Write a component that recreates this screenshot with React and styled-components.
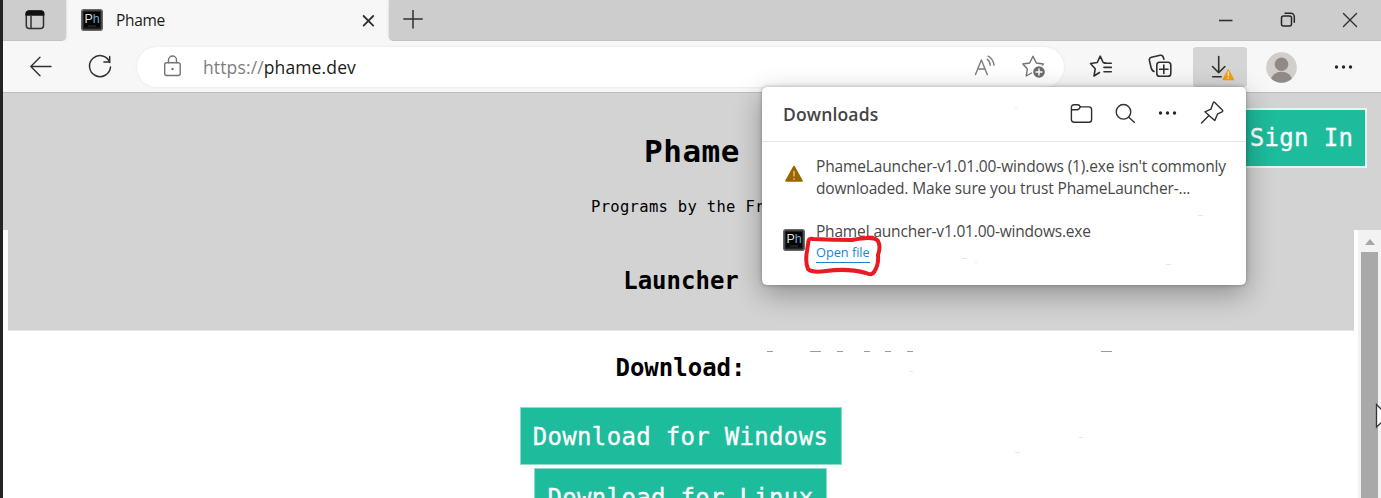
import React from 'react';
import styled, { createGlobalStyle } from 'styled-components';

const Global = createGlobalStyle`
  * { box-sizing: border-box; }
  body { margin: 0; overflow: hidden; background: #fff; font-family: "Open Sans", "Noto Sans", sans-serif; }
  h1, h2, p { margin: 0; }
`;

const Window = styled.div`
  position: relative;
  display: flex;
  flex-direction: column;
  width: 1381px;
  height: 498px;
  overflow: hidden;
  border-left: 3px solid #232323;
`;

const TabStrip = styled.div`
  display: flex;
  flex: none;
  height: 41px;
  background: #f7f7f7;
`;

const StripSection = styled.div`
  display: flex;
  align-items: center;
  background: #cdcdcd;
  border-bottom: 1px solid #c2c2c2;
  height: 41px;
  padding-left: ${p => p.$pad}px;
  flex: ${p => (p.$grow ? '1' : `0 0 ${p.$width}px`)};
  border-radius: ${p => (p.$grow ? '0 0 0 5px' : '0 0 5px 0')};
  box-shadow: 0 0 3px rgba(0, 0, 0, 0.18);
`;

const Tab = styled.div`
  display: flex;
  align-items: center;
  width: 323px;
  height: 41px;
  padding: 0 13px 2px 15px;
`;

const TabTitle = styled.span`
  flex: 1;
  margin-left: 13px;
  font-size: 15.5px;
  letter-spacing: -0.35px;
  color: #1c1c1c;
`;

const WindowControls = styled.div`
  display: flex;
  align-items: center;
  gap: 45px;
  margin-left: auto;
  padding-right: 22px;
`;

const Toolbar = styled.div`
  display: flex;
  flex: none;
  align-items: center;
  height: 52px;
  padding: 1px 26px 0 25px;
  background: #f7f7f7;
  border-bottom: 1px solid #bdbdbd;
`;

const AddressBar = styled.div`
  display: flex;
  align-items: center;
  width: 927px;
  height: 40px;
  margin: 0 24px 0 24px;
  padding: 0 17px 0 25px;
  background: #fff;
  border-radius: 20px;
  box-shadow: 0 0 3px rgba(0, 0, 0, 0.08);
`;

const Url = styled.span`
  flex: 1;
  margin-left: 20px;
  font-size: 17.5px;
  letter-spacing: 0.13px;
  color: #7d7d7d;
  b { font-weight: 400; color: #1a1a1a; }
`;

const Slot = styled.div`
  display: flex;
  align-items: center;
  justify-content: center;
  width: ${p => p.$w}px;
  height: 40px;
  margin-left: ${p => p.$ml || 0}px;
  border-radius: 3px;
  background: ${p => (p.$active ? '#d5d5d5' : 'transparent')};
`;

const Page = styled.main`
  display: flex;
  flex-direction: column;
  flex: 1;
  font-family: "DejaVu Sans Mono", monospace;
  color: #000;
`;

const Masthead = styled.header`
  position: relative;
  display: flex;
  flex-direction: column;
  align-items: center;
  height: 137px;
  padding: 40px 0 0;
  background: #d3d3d3;
`;

const SiteTitle = styled.h1`
  font-size: 31px;
  line-height: 36px;
  letter-spacing: 0.5px;
`;

const Tagline = styled.p`
  margin: 28px 0 0 588px;
  align-self: flex-start;
  font-size: 15.5px;
  line-height: 20px;
  letter-spacing: 0.32px;
  white-space: nowrap;
`;

const SignIn = styled.button`
  position: absolute;
  top: 15px;
  right: 14px;
  width: 132px;
  height: 60px;
  padding: 0 0 0 1px;
  border: 2px solid #e8f5f1;
  background: #1dbc9c;
  color: #fff;
  font: 24px "DejaVu Sans Mono", monospace;
  letter-spacing: 0.35px;
  -webkit-text-stroke: 0.3px #fff;
`;

const Body = styled.div`
  display: flex;
  flex: 1;
  background: #fff;
`;

const Content = styled.div`
  display: flex;
  flex-direction: column;
  align-items: center;
  flex: 1;
  padding: 0 4px 0 5px;
`;

const LauncherBand = styled.section`
  display: flex;
  justify-content: center;
  width: 100%;
  height: 101px;
  padding: 33px 0 0 0;
  background: #d3d3d3;
  border-bottom: 1px solid #e6e6e6;
`;

const Heading = styled.h2`
  height: 36px;
  font-size: 24px;
  line-height: 36px;
  letter-spacing: 0;
`;

const DownloadArea = styled.section`
  display: flex;
  flex-direction: column;
  align-items: center;
  padding: 19px 1px 0 0;
  gap: 3px;
  ${Heading} { margin-bottom: 18px; }
`;

const DownloadButton = styled.button`
  width: ${p => p.$w}px;
  height: 58px;
  flex: none;
  padding: 1px 0 0;
  border: 1px solid #8bdccb;
  background: #1dbc9c;
  color: #fff;
  font: 24px "DejaVu Sans Mono", monospace;
  letter-spacing: 0.32px;
  -webkit-text-stroke: 0.3px #fff;
  white-space: nowrap;
`;

const Scrollbar = styled.div`
  display: flex;
  flex-direction: column;
  width: 23px;
  padding: 9px 3px 0;
  background: #f2f2f2;
`;

const ScrollArrow = styled.i`
  width: 0;
  height: 0;
  margin: 0 auto 7px;
  border: 5px solid transparent;
  border-top: 0;
  border-bottom: 6px solid #a6a6a6;
`;

const ScrollThumb = styled.div`
  flex: 1;
  background: #a9a9a9;
`;

const Popup = styled.aside`
  position: absolute;
  left: 759px;
  top: 87px;
  width: 484px;
  height: 198px;
  border-radius: 5px;
  background: #fff;
  box-shadow: 0 9px 28px rgba(0, 0, 0, 0.32), 0 0 4px rgba(0, 0, 0, 0.3);
`;

const PopupHeader = styled.div`
  display: flex;
  align-items: center;
  height: 55px;
  padding: 0 21px 2px;
  border-bottom: 1px solid #e4e4e4;
  color: #444;
`;

const PopupTitle = styled.strong`
  flex: 1;
  font-size: 17.5px;
  font-weight: 600;
  letter-spacing: 0.15px;
  padding-top: 1px;
`;

const PopupActions = styled.div`
  display: flex;
  align-items: center;
  gap: 21px;
`;

const DownloadRow = styled.div`
  display: flex;
  align-items: flex-start;
  padding: ${p => p.$top}px 0 0 21px;
  > svg { flex: none; margin-top: ${p => p.$icon}px; }
`;

const FileText = styled.div`
  margin-left: 11px;
  font-size: 15.5px;
  line-height: 22px;
  color: #484848;
  white-space: nowrap;
`;

const Line = styled.div`
  letter-spacing: ${p => p.$ls}px;
`;

const OpenLink = styled.a`
  display: block;
  width: 54px;
  height: 20px;
  margin-top: 1px;
  border-bottom: 1px solid #1b83d5;
  color: #1b83d5;
  font-size: 12.8px;
  line-height: 18px;
  letter-spacing: -0.05px;
`;

const Overlay = styled.svg`
  position: absolute;
  left: ${p => p.$x}px;
  top: ${p => p.$y}px;
  pointer-events: none;
`;

const Icon = ({ w = 24, h = w, sw = 1.4, color = '#303030', children }) => (
  <svg width={w} height={h} viewBox={`0 0 ${w} ${h}`} fill="none" stroke={color} strokeWidth={sw} strokeLinecap="round" strokeLinejoin="round">
    {children}
  </svg>
);

const AppLogo = () => (
  <svg width="22" height="22" viewBox="0 0 22 22">
    <rect x="0.8" y="0.8" width="20.4" height="20.4" rx="2" fill="#222" stroke="#686868" strokeWidth="1.6" />
    <rect x="3" y="3" width="16" height="15.5" fill="#050505" />
    <text x="3.5" y="14" fontFamily="Liberation Sans, sans-serif" fontSize="12.5" fill="#ddd">P<tspan fill="#73a5c8">h</tspan></text>
    <path d="M7 17h8" stroke="#3b3b3b" />
  </svg>
);

const Dots = () => (
  <Icon w={20} h={6}>
    {[2.5, 9.5, 16.5].map(x => <circle key={x} cx={x} cy="3" r="1.7" fill="#262626" stroke="none" />)}
  </Icon>
);

const specks = [
  [767, 351, 6], [810, 351, 11], [837, 351, 6], [864, 351, 6], [885, 351, 6], [907, 351, 6], [1101, 351, 11],
];
const faintSpecks = [[910, 371, 3], [1079, 437, 4], [1015, 452, 5], [1198, 215, 5], [1166, 264, 5], [962, 258, 5], [975, 262, 2], [1015, 107, 2]];

export default function App() {
  return (
    <>
      <Global />
      <Window>
        <TabStrip>
          <StripSection $width={63} $pad={22}>
            <Icon w={21} sw={1.5}>
              <rect x="1.3" y="1.2" width="17.2" height="17.4" rx="3" />
              <path d="M1.1 5V4a3 3 0 0 1 3-3h11.6a3 3 0 0 1 3 3v1z" fill="#111" stroke="#111" />
              <path d="M6 6v12.5" />
            </Icon>
          </StripSection>
          <Tab>
            <AppLogo />
            <TabTitle>Phame</TabTitle>
            <Icon w={16} sw={1.8}><path d="M3.6 4l9.6 9.6M13.2 4L3.6 13.6" /></Icon>
          </Tab>
          <StripSection $grow $pad={14}>
            <Icon w={20} sw={1.5}><path d="M10 0v18M.8 9h18.4" /></Icon>
            <WindowControls>
              <Icon w={16} sw={1.6}><path d="M2 8.5h13.5" strokeLinecap="butt" /></Icon>
              <svg width="18" height="16" viewBox="0 0 18 16" fill="none" stroke="#262626" strokeWidth="1.5">
                <rect x="3.5" y="4" width="10" height="10" rx="2" />
                <path d="M6.5 1.2h6.3a3.5 3.5 0 0 1 3.5 3.5v6" />
              </svg>
              <Icon w={18} sw={1.4}><path d="M2.5 2.5L15.5 15.5M15.5 2.5L2.5 15.5" /></Icon>
            </WindowControls>
          </StripSection>
        </TabStrip>

        <Toolbar>
          <Slot $w={26}>
            <Icon w={24} sw={1.4}><path d="M22 11.5H1.8M11 2.3L1.8 11.5l9.2 9.2" /></Icon>
          </Slot>
          <Slot $w={26} $ml={33}>
            <Icon w={26} sw={1.5}><path d="M22.9 8.5A10.5 10.5 0 1 0 23.5 13M22.7 2.5v5.6h-5.8" /></Icon>
          </Slot>
          <AddressBar>
            <Icon w={21} h={24} color="#747474" sw={1.4}>
              <rect x="2.7" y="7.7" width="15.5" height="12.8" rx="2" />
              <path d="M6.5 7.5V5a4 4 0 0 1 8 0v2.5" />
              <circle cx="10.5" cy="14" r="1.2" fill="#747474" stroke="none" />
            </Icon>
            <Url>https://<b>phame.dev</b></Url>
            <Icon w={24} color="#7c7c7c" sw={1.4}>
              <path d="M1.5 19.5l5.9-14.5 5.9 14.5M3.8 14h7.2M13.2 4.2a8 8 0 0 1 3 6M14.2 1.2a12 12 0 0 1 5.8 9" />
            </Icon>
            <Slot $w={26} $ml={23}>
              <Icon w={26} color="#737373" sw={1.4}>
                <path d="M10.5 19L5.2 22l1.2-7.1L1.8 10l6.9-1L12 2.2 15.3 9l7 1-1 1" />
                <circle cx="18" cy="18" r="5.8" fill="#6d6d6d" stroke="none" />
                <path d="M18 15v6M15 18h6" stroke="#fff" />
              </Icon>
            </Slot>
          </AddressBar>
          <Slot $w={26}>
            <Icon w={26} sw={1.6}><path d="M11.5 18.5L6 22l1.2-7.2L2.5 9.5l6.8-1L12.2 2.2l3 6.3 2.2.3M16 9.3h7.3M16 13.4h7.3M16 17.8h7.3" /></Icon>
          </Slot>
          <Slot $w={26} $ml={33}>
            <Icon w={26} sw={1.6}>
              <rect x="9.8" y="8.2" width="14" height="14" rx="2.8" />
              <path d="M16.8 11v8.4M12.6 15.2h8.4M7 17.5C5 16.8 4.3 15 3.9 13L2.4 6.3c-.3-1.6.7-2.7 2.1-3l8.7-2c1.7-.3 2.8.7 3.2 2.3l.5 1.6" />
            </Icon>
          </Slot>
          <Slot $w={54} $ml={20} $active>
            <Icon w={28} h={28} sw={1.6}>
              <path d="M12.7 3.5v16M6.5 13.5l6.2 6.2 6.2-6.2M6.7 23.8h8.5" />
              <path d="M22.3 17.2l5 9.3H17.3z" fill="#f49b16" stroke="#f49b16" />
              <path d="M22.3 19v3.8M22.3 25v.2" stroke="#ffe0a8" />
            </Icon>
          </Slot>
          <Slot $w={31} $ml={19}>
            <svg width="31" height="31" viewBox="0 0 31 31">
              <defs><clipPath id="face"><circle cx="15.5" cy="15.5" r="15.3" /></clipPath></defs>
              <circle cx="15.5" cy="15.5" r="15.3" fill="#d2cfcb" />
              <g clipPath="url(#face)" fill="#8f8a87"><circle cx="15.5" cy="12.2" r="6.8" /><ellipse cx="15.5" cy="28" rx="10.5" ry="8.2" /></g>
            </svg>
          </Slot>
          <Slot $w={20} $ml={37}><Dots /></Slot>
        </Toolbar>

        <Page>
          <Masthead>
            <SiteTitle>Phame</SiteTitle>
            <Tagline>Programs by the Fr</Tagline>
            <SignIn>Sign In</SignIn>
          </Masthead>
          <Body>
            <Content>
              <LauncherBand><Heading>Launcher</Heading></LauncherBand>
              <DownloadArea>
                <Heading>Download:</Heading>
                <DownloadButton $w={322}>Download for Windows</DownloadButton>
                <DownloadButton $w={293}>Download for Linux</DownloadButton>
              </DownloadArea>
            </Content>
            <Scrollbar><ScrollArrow /><ScrollThumb /></Scrollbar>
          </Body>
        </Page>

        <Popup>
          <PopupHeader>
            <PopupTitle>Downloads</PopupTitle>
            <PopupActions>
              <Icon w={24}>
                <path d="M1.4 18.5v-12c0-1.8 1-2.7 2.6-2.7h3.7c1.4 0 2 .8 2.7 2.1h8.4c1.7 0 2.8 1 2.8 2.7v9.9c0 1.9-1 2.8-2.8 2.8H4.2c-1.8 0-2.8-.9-2.8-2.8z" />
                <path d="M1.8 8.8H7c1.8 0 2.4-.9 3.2-2.7" />
              </Icon>
              <Icon w={22}><circle cx="8.5" cy="9.8" r="7.3" /><path d="M13.8 15.3l5.5 5" /></Icon>
              <Dots />
              <Icon w={26}>
                <path d="M15.5 2.3l8 8c.5.5.3 1.2-.4 1.5l-4.4 2-3 6.8-9.8-8.8 6-2.6 2.3-6.5c.2-.8.8-.9 1.3-.4zM9.5 16L2.5 23" />
              </Icon>
            </PopupActions>
          </PopupHeader>
          <DownloadRow $top={13} $icon={9}>
            <svg width="22" height="20" viewBox="0 0 22 20">
              <path d="M11 2.5L19 17H3z" fill="#9b6500" stroke="#9b6500" strokeWidth="1.6" strokeLinejoin="round" />
              <path d="M11 7v5.5M11 14.3v1.5" stroke="#e3c47e" strokeWidth="1.4" />
            </svg>
            <FileText>
              <Line $ls={-0.14}>PhameLauncher-v1.01.00-windows (1).exe isn't commonly</Line>
              <Line $ls={-0.15}>downloaded. Make sure you trust PhameLauncher-...</Line>
            </FileText>
          </DownloadRow>
          <DownloadRow $top={21} $icon={9}>
            <AppLogo />
            <FileText>
              <Line $ls={-0.2}>PhameLauncher-v1.01.00-windows.exe</Line>
              <OpenLink>Open file</OpenLink>
            </FileText>
          </DownloadRow>
        </Popup>

        <Overlay $x={801} $y={234} width="82" height="46" viewBox="804 234 82 46" fill="none">
          <path d="M808.5 241Q809 238 813 239Q833 240 852 240C862 238 874 236 878 241Q881 247 878 255Q879 265 874 272Q872 276 866 273Q848 268 826 271Q812 273 808 269Q805 262 807 251z" stroke="#e91b22" strokeWidth="4" strokeLinejoin="round" />
        </Overlay>
        <Overlay $x={0} $y={0} width="1378" height="498" viewBox="3 0 1378 498">
          {specks.map(([x, y, w]) => <rect key={x} x={x} y={y} width={w} height="1" fill="#9b9b9b" />)}
          {faintSpecks.map(([x, y, w]) => <rect key={`${x}-${y}`} x={x} y={y} width={w} height="1" fill="#e6e6e6" />)}
          <path d="M1376.5 404.5v22.5l5.5-5v-12z" fill="#fff" stroke="#33333b" strokeWidth="1.3" />
        </Overlay>
      </Window>
    </>
  );
}
